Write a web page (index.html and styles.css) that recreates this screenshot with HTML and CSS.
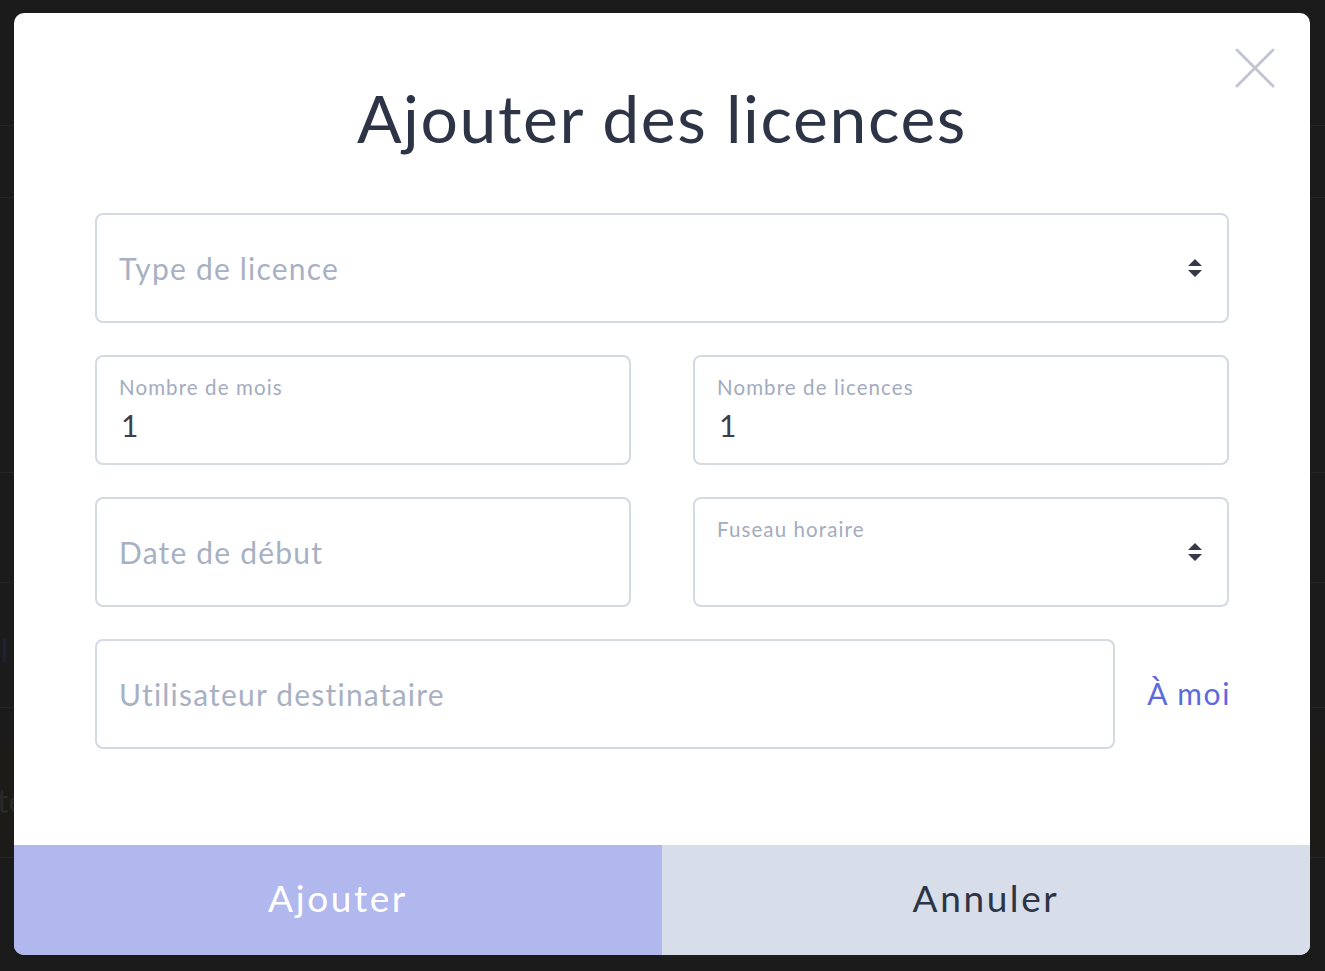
FILE: index.html
```html
<!DOCTYPE html>
<html lang="fr">
  <head>
    <meta charset="UTF-8" />
    <meta name="viewport" content="width=device-width, initial-scale=1.0" />
    <title>Ajouter des licences</title>
    <link rel="stylesheet" href="styles.css">
  </head>
  <body>
    <!-- page sitting under the overlay -->
    <div class="page">
      <div class="page-row row-a"></div>
      <div class="page-row row-b"></div>
      <div class="page-row row-c"></div>
      <div class="page-row row-d"></div>
      <div class="page-row row-e"><span>I</span></div>
      <div class="page-row row-f"><span>te</span></div>
    </div>

    <div class="overlay">
      <div class="modal">
        <button class="close" type="button" aria-label="Fermer">
          <svg width="40" height="40" viewBox="0 0 40 40">
            <path d="M2 2 L38 38 M38 2 L2 38" stroke="currentColor" stroke-width="3" stroke-linecap="round" />
          </svg>
        </button>

        <div class="modal-body">
          <h1 class="title">Ajouter des licences</h1>

          <form class="form">
            <div class="field select">
              <select name="type" required>
                <option value="" selected disabled hidden>Type de licence</option>
                <option>Standard</option>
                <option>Premium</option>
              </select>
              <svg class="arrows" width="16" height="20" viewBox="0 0 16 20">
                <path d="M8 0 L15 7 L1 7 Z M1 11 L15 11 L8 18 Z" fill="currentColor" />
              </svg>
            </div>

            <div class="row">
              <label class="field labelled">
                <span class="field-label">Nombre de mois</span>
                <input type="number" name="months" value="1" min="1" />
              </label>
              <label class="field labelled">
                <span class="field-label">Nombre de licences</span>
                <input type="number" name="count" value="1" min="1" />
              </label>
            </div>

            <div class="row">
              <div class="field">
                <input type="text" name="start" placeholder="Date de début" />
              </div>
              <label class="field labelled select">
                <span class="field-label">Fuseau horaire</span>
                <select name="timezone">
                  <option value="" selected></option>
                  <option>Europe/Paris</option>
                </select>
                <svg class="arrows" width="16" height="20" viewBox="0 0 16 20">
                  <path d="M8 0 L15 7 L1 7 Z M1 11 L15 11 L8 18 Z" fill="currentColor" />
                </svg>
              </label>
            </div>

            <div class="row user-row">
              <div class="field">
                <input type="text" name="user" placeholder="Utilisateur destinataire" />
              </div>
              <a class="self-link" href="#">À moi</a>
            </div>
          </form>
        </div>

        <div class="modal-footer">
          <button class="btn btn-primary" type="button">Ajouter</button>
          <button class="btn btn-secondary" type="button">Annuler</button>
        </div>
      </div>
    </div>
  </body>
</html>
```

FILE: styles.css
```css
* {
  margin: 0;
  padding: 0;
  box-sizing: border-box;
  font-family: "Lato", "Noto Sans", sans-serif;
}

body {
  width: 100%;
  min-height: 100vh;
  background-color: #1b1b1b;
  overflow: hidden;
}

/* dimmed page behind the modal */
.page {
  display: flex;
  flex-direction: column;
}

.page-row {
  border-bottom: 1px solid #262626;
  color: #222;
  font-size: 32px;
  display: flex;
  align-items: center;
}

.row-a { height: 126px; }
.row-b { height: 72px; }
.row-c { height: 275px; }
.row-d { height: 110px; }
.row-e { height: 125px; color: #1d2130; font-size: 34px; padding-top: 8px; }
.row-f {
  height: 150px;
  color: #2a2a28;
  margin-left: -3px;
  padding-top: 36px;
  background: linear-gradient(#1b1b1b 0 32px, #1c1b18 32px);
}

.overlay {
  position: absolute;
  inset: 0;
}

.modal {
  position: relative;
  width: 1296px;
  height: 942px;
  margin: 13px 0 0 14px;
  background-color: #fff;
  border-radius: 10px;
  overflow: hidden;
  display: flex;
  flex-direction: column;
}

.close {
  position: absolute;
  top: 35px;
  right: 35px;
  width: 40px;
  height: 40px;
  border: none;
  background: none;
  color: #c3c6d1;
  cursor: pointer;
}

.close svg {
  display: block;
}

.modal-body {
  flex: 1;
  padding: 0 81px;
}

.title {
  margin-top: 65px;
  font-size: 66px;
  font-weight: 400;
  line-height: 80px;
  letter-spacing: 1.6px;
  color: #2d3446;
  text-align: center;
}

.form {
  margin-top: 55px;
  display: flex;
  flex-direction: column;
  gap: 32px;
}

.row {
  display: grid;
  grid-template-columns: 1fr 1fr;
  gap: 62px;
}

.field {
  position: relative;
  height: 110px;
  border: 2px solid #d4d9e2;
  border-radius: 8px;
  display: flex;
  flex-direction: column;
  justify-content: center;
}

.field input,
.field select {
  width: 100%;
  border: none;
  outline: none;
  background: none;
  appearance: none;
  -moz-appearance: textfield;
  font-size: 30px;
  letter-spacing: 1.2px;
  color: #3a3f4f;
  padding: 0 22px;
}

.field input::-webkit-outer-spin-button,
.field input::-webkit-inner-spin-button {
  -webkit-appearance: none;
}

.field input::placeholder {
  color: #a8b0c3;
}

.field select:invalid {
  color: #a8b0c3;
}

.field.labelled {
  justify-content: flex-start;
  padding-top: 16px;
}

.field-label {
  font-size: 20.5px;
  letter-spacing: 1.1px;
  color: #a3abbe;
  padding-left: 22px;
  line-height: 28px;
}

.field.labelled input {
  margin-top: 6px;
  padding-left: 24px;
}

.arrows {
  position: absolute;
  right: 24px;
  top: 44px;
  color: #353a48;
  pointer-events: none;
}

.user-row {
  grid-template-columns: 1fr auto;
  gap: 32px;
  align-items: center;
}

.self-link {
  font-size: 30px;
  letter-spacing: 1.6px;
  color: #5c6ae0;
  text-decoration: none;
  padding-bottom: 2px;
  margin-right: -2px;
}

.modal-footer {
  display: grid;
  grid-template-columns: 1fr 1fr;
  height: 110px;
}

.btn {
  border: none;
  font-size: 37px;
  letter-spacing: 2.6px;
  padding-bottom: 6px;
  cursor: pointer;
}

.btn-primary {
  background-color: #b0b8ee;
  color: #fff;
}

.btn-secondary {
  background-color: #d8dee9;
  color: #2d3446;
}
```
